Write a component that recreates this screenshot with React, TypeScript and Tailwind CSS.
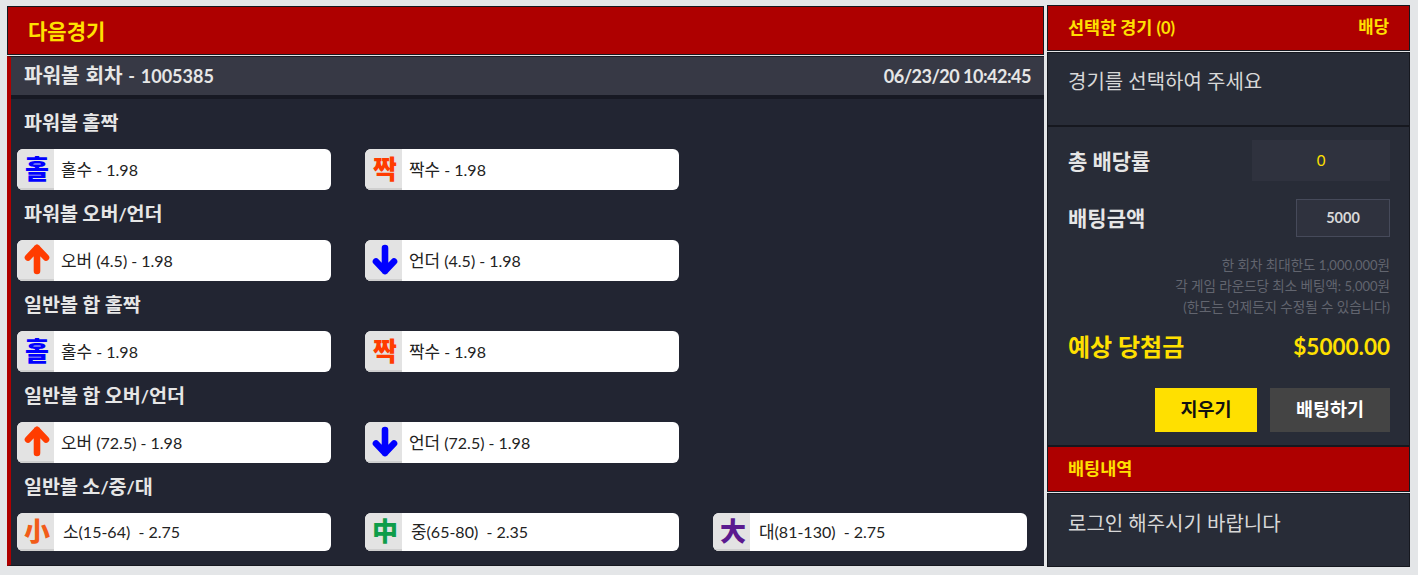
import React from 'react';

const FONT = { fontFamily: 'Lato, "Noto Sans CJK KR", sans-serif' };

type Tile = { glyph: string; color: string } | { arrow: 'up' | 'down' };

// Hangul runs are drawn a little larger than the Latin around them
const K = ({ text, cls = 'text-[1.12em]' }: { text: string; cls?: string }) => (
  <>
    {text.split(/([가-힣]+)/).map((part, i) =>
      /[가-힣]/.test(part) ? (
        <span key={i} className={`${cls} leading-none`}>
          {part}
        </span>
      ) : (
        part
      ),
    )}
  </>
);

const Arrow = ({ dir }: { dir: 'up' | 'down' }) => (
  <svg width="26" height="31" viewBox="0 0 26 31" className={dir === 'down' ? 'rotate-180' : ''}>
    <path
      d="M13 4 L4 13.5 M13 4 L22 13.5 M13 4 V27"
      fill="none"
      stroke={dir === 'up' ? '#ff3c00' : '#0000ff'}
      strokeWidth="6.6"
      strokeLinecap="round"
      strokeLinejoin="round"
    />
  </svg>
);

const Option = ({ tile, label, short }: { tile: Tile; label: string; short?: boolean }) => (
  <div className={`flex items-center bg-white rounded-[6px] overflow-hidden ${short ? 'h-[38px]' : 'h-[41px]'}`}>
    <div className="w-[37px] h-full shrink-0 flex items-center justify-center pl-[3px] bg-[#e3e3e3] border-b-2 border-[#cfcfcf]">
      {'arrow' in tile ? (
        <Arrow dir={tile.arrow} />
      ) : (
        <span className="text-[26px] font-black leading-none" style={{ color: tile.color }}>
          {tile.glyph}
        </span>
      )}
    </div>
    <span className={`text-[16px] text-[#222] whitespace-pre ${short ? 'ml-[9px]' : 'ml-[7px]'}`}>
      <K text={label} cls="text-[1.06em]" />
    </span>
  </div>
);

const HOL = { glyph: '홀', color: '#0000ff' };
const JJAK = { glyph: '짝', color: '#ff3c00' };
const UP: Tile = { arrow: 'up' };
const DOWN: Tile = { arrow: 'down' };

const sections: { title: string; short?: boolean; items: { tile: Tile; label: string }[] }[] = [
  { title: '파워볼 홀짝', items: [{ tile: HOL, label: '홀수 - 1.98' }, { tile: JJAK, label: '짝수 - 1.98' }] },
  { title: '파워볼 오버/언더', items: [{ tile: UP, label: '오버 (4.5) - 1.98' }, { tile: DOWN, label: '언더 (4.5) - 1.98' }] },
  { title: '일반볼 합 홀짝', items: [{ tile: HOL, label: '홀수 - 1.98' }, { tile: JJAK, label: '짝수 - 1.98' }] },
  { title: '일반볼 합 오버/언더', items: [{ tile: UP, label: '오버 (72.5) - 1.98' }, { tile: DOWN, label: '언더 (72.5) - 1.98' }] },
  {
    title: '일반볼 소/중/대',
    short: true,
    items: [
      { tile: { glyph: '小', color: '#f25c19' }, label: '소(15-64)  - 2.75' },
      { tile: { glyph: '中', color: '#0f9d4a' }, label: '중(65-80)  - 2.35' },
      { tile: { glyph: '大', color: '#5b1a8f' }, label: '대(81-130)  - 2.75' },
    ],
  },
];

export default function App() {
  return (
    <div className="w-[1418px] h-[575px] bg-[#e4e6e8] overflow-hidden flex pl-[7px] pt-[5px]" style={FONT}>
      {/* Left column */}
      <div className="w-[1037px] mt-[1px]">
        <div className="h-[49px] bg-[#ae0000] border border-[#16181f] flex items-center pl-[20px]">
          <span className="text-[21px] font-bold text-[#ffe000] leading-none">다음경기</span>
        </div>
        <div className="mt-[1px] h-[510px] bg-[#222532] border-l-[4px] border-[#ae0000] border-t border-t-[#16181f] border-b border-b-[#16181f]">
          <div className="h-[38px] bg-[#373945] border-b-[4px] border-[#171923] flex items-center justify-between pl-[13px] pr-[13px] box-content">
            <span className="text-[18px] font-bold text-[#e6e6e6] whitespace-pre [word-spacing:1.4px]">
              <K text="파워볼 회차 - 1005385" />
            </span>
            <span className="text-[18px] font-bold text-[#e6e6e6] tracking-[-0.5px]">06/23/20 10:42:45</span>
          </div>
          <div className="pl-[6px]">
            {sections.map(s => (
              <div key={s.title}>
                <div className="h-[50px] flex items-center pl-[7px] pt-[1px] text-[17.5px] font-bold text-[#e6e6e6]">
                  <span>
                    <K text={s.title} />
                  </span>
                </div>
                <div className="grid grid-cols-[313.5px_313.5px_313.5px] gap-x-[34.5px]">
                  {s.items.map(item => (
                    <Option key={item.label} tile={item.tile} label={item.label} short={s.short} />
                  ))}
                </div>
              </div>
            ))}
          </div>
        </div>
      </div>

      {/* Right column */}
      <div className="w-[363px] ml-[3px] flex flex-col">
        <div className="h-[46px] bg-[#ae0000] border border-[#16181f] flex items-center justify-between pl-[20px] pr-[20px] font-bold text-[#ffe000]">
          <span className="text-[16.5px]">
            <K text="선택한 경기 (0)" cls="text-[1.06em]" />
          </span>
          <span className="text-[16.7px]">배당</span>
        </div>
        <div className="mt-[1px] h-[73px] bg-[#282c37] border border-[#16181f] border-b-0 pl-[20px] pt-[14px] text-[20px] leading-[28px] text-[#d8d8d8]">
          경기를 선택하여 주세요
        </div>
        <div className="h-[322px] bg-[#282c37] border-x border-[#16181f] border-t-2 border-b-2 flex flex-col pl-[20px] pr-[19px]">
          <div className="flex items-center justify-between mt-[13px] h-[41px]">
            <span className="text-[21px] font-bold text-[#e6e6e6]">총 배당률</span>
            <div className="w-[138px] h-[41px] bg-[#2f323e] flex items-center justify-center text-[15px] text-[#ffe000]">0</div>
          </div>
          <div className="flex items-center justify-between mt-[18px] h-[38px]">
            <span className="text-[21px] font-bold text-[#e6e6e6]">배팅금액</span>
            <div className="w-[94px] h-[38px] bg-[#2f323e] border border-[#464a5a] flex items-center justify-center text-[14.5px] font-bold text-[#d8d8d8]">5000</div>
          </div>
          <div className="mt-[18px] text-right text-[13px] leading-[21px] text-[#62656f]">
            <div><K text="한 회차 최대한도 1,000,000원" cls="text-[1.04em]" /></div>
            <div><K text="각 게임 라운드당 최소 베팅액: 5,000원" cls="text-[1.04em]" /></div>
            <div><K text="(한도는 언제든지 수정될 수 있습니다)" cls="text-[1.04em]" /></div>
          </div>
          <div className="flex items-center justify-between mt-[11px] h-[36px] font-bold text-[#ffe000]">
            <span className="text-[24px]">예상 당첨금</span>
            <span className="text-[22.5px]">$5000.00</span>
          </div>
          <div className="flex justify-end gap-[13px] mt-[23px]">
            <button className="w-[102px] h-[44px] bg-[#ffe000] text-[#111] text-[18.5px] font-bold">지우기</button>
            <button className="w-[120px] h-[44px] bg-[#444444] text-white text-[18.5px] font-bold">배팅하기</button>
          </div>
        </div>
        <div className="h-[45px] bg-[#ae0000] border-x border-b border-[#16181f] flex items-center pl-[20px] text-[17.5px] font-bold text-[#ffe000]">
          배팅내역
        </div>
        <div className="mt-[1px] h-[74px] bg-[#282c37] border border-[#16181f] pl-[20px] pt-[15px] text-[20px] leading-[28px] text-[#d8d8d8]">
          로그인 해주시기 바랍니다
        </div>
      </div>
    </div>
  );
}
